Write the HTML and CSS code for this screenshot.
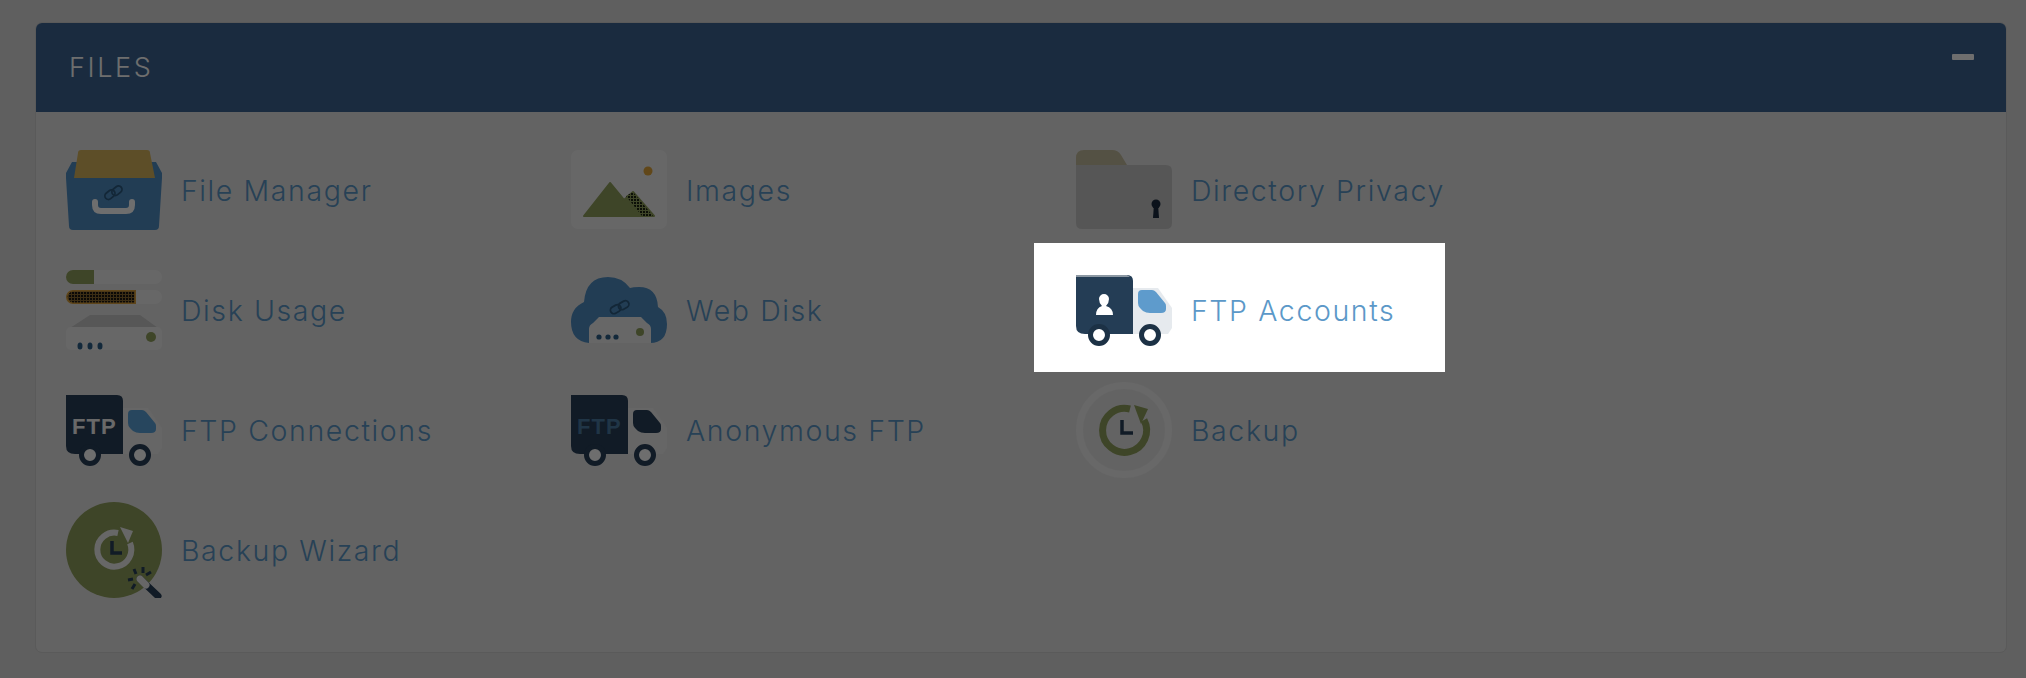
FILE: index.html
```html
<!DOCTYPE html>
<html lang="en">
<head>
<meta charset="utf-8">
<title>Files</title>
<link rel="stylesheet" href="styles.css">
</head>
<body>
<section class="panel">
  <header class="panel-head">
    <h2 class="panel-title">FILES</h2>
    <span class="collapse"></span>
  </header>
  <div class="panel-body">
    <a class="item">
      <svg class="icon" viewBox="0 0 96 96">
        <path d="M6 20L0 31V36L3 84q0 4 4 4H89q4 0 4-4L96 36V31L90 20z" fill="#4f8ec4"/>
        <path d="M12 11q0-3 3-3H81q3 0 3 3L89 36H8z" fill="#d8b55d"/>
        <path d="M29 60v3q0 6 6 6H60q6 0 6-6v-3" fill="none" stroke="#fff" stroke-width="6" stroke-linecap="round"/>
        <g fill="none" stroke="#2c5a80" stroke-width="1.800"><rect x="38" y="49" width="11" height="7" rx="3.500" transform="rotate(-40 44 52)"/><rect x="45" y="45" width="11" height="7" rx="3.500" transform="rotate(-40 51 48)"/></g>
      </svg>
      <span class="label">File Manager</span>
    </a>
    <a class="item">
      <svg class="icon" viewBox="0 0 96 96">
        <defs>
          <pattern id="dither-green" width="3" height="3" patternUnits="userSpaceOnUse"><rect width="3" height="3" fill="#90a05d"/><rect width="2" height="2" fill="#1d2412"/></pattern>
        </defs>
        <rect y="8" width="96" height="79" rx="7" fill="#efefef"/>
        <circle cx="77" cy="29" r="4.500" fill="#e0a63a"/>
        <path d="M39 41L13 74H83L62 50L53 58z" fill="#90a05d" stroke="#90a05d" stroke-width="2" stroke-linejoin="round"/>
        <path d="M55 54L62 50L82 74H71z" fill="url(#dither-green)"/>
      </svg>
      <span class="label">Images</span>
    </a>
    <a class="item">
      <svg class="icon" viewBox="0 0 96 96">
        <path d="M0 16q0-8 8-8H36q6 0 9 5l6 10H0z" fill="#c4bc9d"/>
        <path d="M0 23H90q6 0 6 6V81q0 6-6 6H6q-6 0-6-6z" fill="#c8c8c8"/>
        <circle cx="80" cy="62" r="4.500" fill="#1a2b3f"/>
        <path d="M78 62h4l1 14h-6z" fill="#1a2b3f"/>
      </svg>
      <span class="label">Directory Privacy</span>
    </a>

    <a class="item">
      <svg class="icon" viewBox="0 0 96 96">
        <defs>
          <pattern id="dither-orange" width="3" height="3" patternUnits="userSpaceOnUse"><rect width="3" height="3" fill="#8a6a30"/><rect width="2" height="2" fill="#1a1712"/></pattern>
        </defs>
        <rect y="8" width="96" height="14" rx="7" fill="#efefef"/>
        <path d="M7 8H28V22H7a7 7 0 0 1 0-14z" fill="#90a05d"/>
        <rect y="28" width="96" height="14" rx="7" fill="#efefef"/>
        <path d="M7 28.800H69.200V41.200H7a6.200 6.200 0 0 1 0-12.400z" fill="url(#dither-orange)" stroke="#d9a03c" stroke-width="1.600"/>
        <path d="M4 66L24 53H74L92 66z" fill="#c9c9c9"/>
        <rect y="65" width="96" height="23" rx="5" fill="#efefef"/>
        <g fill="#2c5f8a"><ellipse cx="14" cy="84" rx="2.500" ry="3.500"/><ellipse cx="24" cy="84" rx="2.500" ry="3.500"/><ellipse cx="34" cy="84" rx="2.500" ry="3.500"/></g>
        <circle cx="85" cy="75" r="5" fill="#90a05d"/>
      </svg>
      <span class="label">Disk Usage</span>
    </a>
    <a class="item">
      <svg class="icon" viewBox="0 0 96 96">
        <path d="M18 81Q0 79 0 60q0-14 13-20Q15 15 37 15q14 0 22 11 3-1 9-1 18 0 19 20 9 5 9 17 0 19-17 19z" fill="#4f8ec4"/>
        <path d="M18 81V67q0-4 4-6l6-6H70l6 6q4 2 4 6V81z" fill="#efefef"/>
        <g fill="#2c5f8a"><circle cx="28" cy="75" r="2.600"/><circle cx="37" cy="75" r="2.600"/><circle cx="45" cy="75" r="2.600"/></g>
        <circle cx="69" cy="70" r="4" fill="#90a05d"/>
        <g fill="none" stroke="#2c5a80" stroke-width="1.800"><rect x="39" y="44" width="11" height="7" rx="3.500" transform="rotate(-30 44 47)"/><rect x="47" y="40" width="11" height="7" rx="3.500" transform="rotate(-30 52 43)"/></g>
      </svg>
      <span class="label">Web Disk</span>
    </a>
    <a class="item item-active">
      <svg class="icon" viewBox="0 -1 96 96">
        <path d="M57 25H82L96 45V65L92 71H57z" fill="#e6eaee"/>
        <path d="M62 31q0-4 4-4H76q2 0 4 2L89 40q1 1 1 3v3q0 4-5 4H74q-4 0-7-2L64 45q-2-2-2-5z" fill="#5e9bcc"/>
        <path d="M0 12H51q6 0 6 6V71H9q-9 0-9-8z" fill="#243d55"/>
        <path d="M0 12H51l3 2H0z" fill="#8c98a3"/>
        <path d="M20 52q0-7 6-9-3-3-3-7a5 5 0 0 1 10 0q0 4-3 7 7 2 7 9z" fill="#fff"/>
        <circle cx="23" cy="72" r="8.500" fill="#fff" stroke="#1c3145" stroke-width="5"/>
        <circle cx="74" cy="72" r="8.500" fill="#fff" stroke="#1c3145" stroke-width="5"/>
      </svg>
      <span class="label">FTP Accounts</span>
    </a>

    <a class="item">
      <svg class="icon" viewBox="0 -1 96 96">
        <path d="M57 25H82L96 45V65L92 71H57z" fill="#ececec"/>
        <path d="M62 31q0-4 4-4H76q2 0 4 2L89 40q1 1 1 3v3q0 4-5 4H74q-4 0-7-2L64 45q-2-2-2-5z" fill="#5ba3d9"/>
        <path d="M0 12H51q6 0 6 6V71H9q-9 0-9-8z" fill="#283f58"/>
        <text class="truck-text" x="6" y="51">FTP</text>
        <circle cx="24" cy="72" r="8.500" fill="#fff" stroke="#283f58" stroke-width="5"/>
        <circle cx="74" cy="72" r="8.500" fill="#fff" stroke="#283f58" stroke-width="5"/>
      </svg>
      <span class="label">FTP Connections</span>
    </a>
    <a class="item">
      <svg class="icon" viewBox="0 -1 96 96">
        <path d="M57 25H82L96 45V65L92 71H57z" fill="#ececec"/>
        <path d="M62 31q0-4 4-4H76q2 0 4 2L89 40q1 1 1 3v3q0 4-5 4H74q-4 0-7-2L64 45q-2-2-2-5z" fill="#283f58"/>
        <path d="M0 12H51q6 0 6 6V71H9q-9 0-9-8z" fill="#283f58"/>
        <text class="truck-text truck-text-dim" x="6" y="51">FTP</text>
        <circle cx="24" cy="72" r="8.500" fill="#fff" stroke="#283f58" stroke-width="5"/>
        <circle cx="74" cy="72" r="8.500" fill="#fff" stroke="#283f58" stroke-width="5"/>
      </svg>
      <span class="label">Anonymous FTP</span>
    </a>
    <a class="item">
      <svg class="icon" viewBox="0 0 96 96">
        <circle cx="48" cy="48" r="44.500" fill="none" stroke="#f0f0f0" stroke-width="7"/>
        <path d="M54 27A22 22 0 1 0 68 38" fill="none" stroke="#90a05d" stroke-width="7"/>
        <path d="M58 23L72 27L65 42z" fill="#90a05d"/>
        <path d="M46 38V51H57" fill="none" stroke="#283f58" stroke-width="3.500"/>
      </svg>
      <span class="label">Backup</span>
    </a>

    <a class="item">
      <svg class="icon" viewBox="0 0 96 96">
        <circle cx="48" cy="48" r="48" fill="#90a05d"/>
        <path d="M52 31A17 17 0 1 0 64 41" fill="none" stroke="#efefef" stroke-width="6"/>
        <path d="M54 25L67 29L62 41z" fill="#efefef"/>
        <path d="M46 39V51H56" fill="none" stroke="#283f58" stroke-width="3.500"/>
        <path d="M74 77L92 94" stroke="#283f58" stroke-width="7" stroke-linecap="round"/>
        <path d="M74 77L80 83" stroke="#efefef" stroke-width="7" stroke-linecap="round"/>
        <path d="M68 67l2 5M77 65v6M85 70l-5 3M62 78l5-1M66 87l3-5" stroke="#283f58" stroke-width="3"/>
      </svg>
      <span class="label">Backup Wizard</span>
    </a>
  </div>
</section>
<div class="dim"></div>
</body>
</html>
```

FILE: styles.css
```css
* { box-sizing: border-box; }

html, body { height: 100%; }

body {
  margin: 0;
  padding: 23px 20px 26px 36px;
  background: #dddddd;
  font-family: Inter, "Liberation Sans", sans-serif;
  overflow: hidden;
}

.panel {
  height: 629px;
  background: #e6e6e6;
  border-radius: 6px;
  box-shadow: 0 0 0 1px #d0d0d0;
}

.panel-head {
  height: 89px;
  display: flex;
  align-items: center;
  justify-content: space-between;
  padding: 0 32px 0 33px;
  background: #3c6492;
  border-radius: 6px 6px 0 0;
}

.panel-title {
  margin: 0;
  font-size: 27px;
  font-weight: 300;
  letter-spacing: 2.6px;
  color: #ffffff;
}

.collapse {
  width: 22px;
  height: 6px;
  margin-bottom: 22px;
  border-radius: 1px;
  background: #ffffff;
}

.panel-body {
  display: grid;
  grid-template-columns: repeat(3, 505px);
  grid-auto-rows: 120px;
  padding: 18px 30px 42px;
}

.item {
  position: relative;
  display: flex;
  align-items: center;
  gap: 19px;
  color: #5b98c8;
}

.icon {
  flex: none;
  width: 96px;
  height: 96px;
}

.label {
  font-size: 28.5px;
  font-weight: 300;
  letter-spacing: 1.6px;
}

.item-active {
  z-index: 2;
}

.item-active::before {
  content: "";
  position: absolute;
  z-index: -1;
  top: -7px;
  bottom: -2px;
  left: -42px;
  width: 411px;
  background: #ffffff;
}

.truck-text {
  font-family: "Liberation Sans", sans-serif;
  font-size: 22px;
  font-weight: 700;
  letter-spacing: 1px;
  fill: #f4f4f4;
}

.truck-text-dim {
  fill: #4a7ba3;
}

.dim {
  position: fixed;
  inset: 0;
  z-index: 1;
  background: rgba(0, 0, 0, 0.57);
}
```
